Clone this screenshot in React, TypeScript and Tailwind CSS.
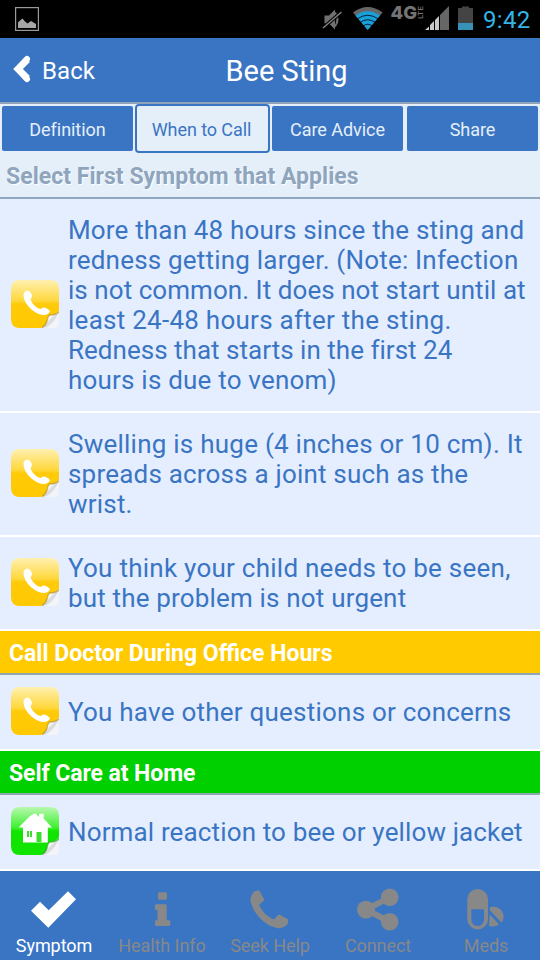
import type { ReactNode } from 'react';

type PageKind = 'phone' | 'home';

interface Line {
  text: string;
  tracking: string;
}

const symptoms: Line[][] = [
  [
    { text: 'More than 48 hours since the sting and', tracking: 'tracking-[0.17px]' },
    { text: 'redness getting larger. (Note: Infection', tracking: 'tracking-[0.2px]' },
    { text: 'is not common. It does not start until at', tracking: 'tracking-[0.05px]' },
    { text: 'least 24-48 hours after the sting.', tracking: 'tracking-[0.26px]' },
    { text: 'Redness that starts in the first 24', tracking: 'tracking-[0.02px]' },
    { text: 'hours is due to venom)', tracking: 'tracking-[0.2px]' },
  ],
  [
    { text: 'Swelling is huge (4 inches or 10 cm). It', tracking: 'tracking-[0.24px]' },
    { text: 'spreads across a joint such as the', tracking: 'tracking-[0.2px]' },
    { text: 'wrist.', tracking: 'tracking-[0.2px]' },
  ],
  [
    { text: 'You think your child needs to be seen,', tracking: 'tracking-[0.25px]' },
    { text: 'but the problem is not urgent', tracking: 'tracking-[0.17px]' },
  ],
];

const phonePath =
  'M1600 1240q0 27-10 70.5t-21 68.5q-21 50-122 106-94 51-186 51-27 0-52.5-3.5t-57.5-12.5-47.5-14.5-55.5-20.5-49-18q-98-35-175-83-128-79-264.5-215.5t-215.5-264.5q-48-77-83-175-3-9-18-49t-20.5-55.5-14.5-47.5-12.5-57.5-3.5-52.5q0-92 51-186 56-101 106-122 25-11 68.5-21t70.5-10q14 0 21 3 18 6 53 76 11 19 30 54t35 63.5 31 53.5q3 4 17.5 25t21.5 35.5 7 28.5q0 20-28.5 50t-62 55-62 53-28.5 46q0 9 5 22.5t8.5 20.5 14 24 11.5 19q76 137 174 235t235 174q2 1 19 11.5t24 14 20.5 8.5 22.5 5q18 0 46-28.5t53-62 55-62 50-28.5q14 0 28.5 7t35.5 21.5 25 17.5q25 15 53.5 31t63.5 35 54 30q70 35 76 53 3 7 3 21z';

function StatusBar() {
  return (
    <div className="flex h-[38px] shrink-0 items-start bg-black pl-[15px] pr-[9px]">
      <svg width="24" height="24" viewBox="0 0 24 24" className="mt-[7px]">
        <rect x="0.6" y="0.6" width="22.8" height="22.8" fill="none" stroke="#9a9a9a" strokeWidth="1.2" />
        <path d="M3 21V15.5L5 13.5L7.5 11.5L10 14.5L12.5 16.5L16 14L18.5 15.5L21 17V21Z" fill="#a6a6a6" />
      </svg>
      <svg width="152" height="38" viewBox="322 0 152 38" className="ml-auto">
        {/* Muted speaker */}
        <path d="M324.500 15.500h4.500l6-6v20l-6-6h-4.500z" fill="#707070" />
        <path d="M335 12.500q5 7 0 14" fill="none" stroke="#707070" strokeWidth="2" />
        <path d="M323 28L341.500 12" stroke="#000" strokeWidth="3.500" />
        <path d="M323 28L341.500 12" stroke="#808080" strokeWidth="1.500" />
        {/* Wifi */}
        <path d="M367.700 30L353 12.500Q367.700 1.500 382.600 12.500Z" fill="#666" />
        <path d="M367.700 30L355.500 15.500Q367.700 7 380 15.500Z" fill="#19a0da" />
        <g fill="none" stroke="#000" strokeWidth="0.800">
          <path d="M357 19Q367.700 11.500 378.500 19" />
          <path d="M360 22.500Q367.700 17 375.500 22.500" />
          <path d="M363 26Q367.700 22.500 372.500 26" />
        </g>
        {/* Network type */}
        <text x="390.500" y="18.900" textLength="26.500" lengthAdjust="spacingAndGlyphs" className="fill-[#747474] font-[Inter] text-[17.800px] font-extrabold">4G</text>
        <text transform="translate(423.400 19) rotate(-90)" textLength="13" lengthAdjust="spacingAndGlyphs" className="fill-[#8a8a8a] font-[Roboto] text-[7.500px]">LTE</text>
        {/* Signal */}
        <path d="M440 30V15L449 6V30Z" fill="#666" />
        <path d="M425 30L429 26.500V30ZM430 30V25L434 21V30ZM435 30V20L439 16V30Z" fill="#c8c8c8" />
        {/* Battery */}
        <path d="M458 8h4V6.500h7V8h4v22h-15z" fill="#444" />
        <path d="M458 23h15v7h-15z" fill="#3792b8" />
      </svg>
      <span className="ml-[9px] mt-[6px] w-[48px] text-[24px] leading-[28px] tracking-[0.3px] text-[#33b5e5]">9:42</span>
    </div>
  );
}

function TopicTab({ label, selected }: { label: string; selected?: boolean }) {
  return selected ? (
    <div className="h-[49px] w-[135px] rounded-[4px] border-2 border-[#3a75c4] bg-[#e5effa] pr-[2px] pt-[12px] text-center text-[18px] leading-[24px] tracking-[-0.08px] text-[#3a75c4]">
      {label}
    </div>
  ) : (
    <div className="mx-[2px] mt-[2px] h-[45px] w-[131px] rounded-[2px] bg-[#3a75c4] pt-[12px] text-center text-[18px] leading-[24px] tracking-[-0.05px] text-[#e5effa]">
      {label}
    </div>
  );
}

function StickyIcon({ kind }: { kind: PageKind }) {
  const home = kind === 'home';
  return (
    <svg width="48" height="48" viewBox="0 0 48 48" className="mb-[2px] shrink-0">
      <defs>
        <linearGradient id={`top-${kind}`} x1="0" y1="0" x2="0" y2="1">
          <stop offset="0" stopColor={home ? '#b8f8b0' : '#fff0b0'} />
          <stop offset="0.44" stopColor={home ? '#3cf02c' : '#ffd73a'} />
          <stop offset="0.5" stopColor={home ? '#10e400' : '#ffca08'} />
          <stop offset="1" stopColor={home ? '#10e400' : '#ffc800'} />
        </linearGradient>
        <linearGradient id={`curl-${kind}`} x1="0" y1="0" x2="1" y2="1">
          <stop offset="0.2" stopColor="#999" />
          <stop offset="0.42" stopColor="#fff" />
          <stop offset="0.58" stopColor="#d4d8dc" />
          <stop offset="0.8" stopColor="#fff" />
        </linearGradient>
      </defs>
      <path d="M9 0H39Q48 0 48 9V43Q48 48 43 48H9Q0 48 0 39V9Q0 0 9 0Z" fill="#f2f4f8" />
      <path d="M9 0H39Q48 0 48 9V32Q47 35 41 36Q38 37 37 41Q36 47 30 48H9Q0 48 0 39V9Q0 0 9 0Z" fill={`url(#top-${kind})`} />
      <path d="M48 30Q45 35 39 35Q36.500 36 36 41Q35 46 30 48Q43 48 48 30Z" fill={`url(#curl-${kind})`} />
      <path d="M47.500 32Q45 35 38.500 35Q36.500 37 36 41Q35 45 31 47.500" fill="none" stroke={home ? '#2b9a22' : '#a88820'} strokeOpacity="0.6" strokeWidth="1.300" />
      {home ? (
        <>
          <path d="M7.500 20.500L19 9L24 6.300L28 10V6.800H32.700V11.500L41 20.500H36.800V35.500H12V20.500Z" fill="#fff" />
          <path d="M16 24h2v6h-2zM19 24h2v6h-2zM25.500 25h5v10h-5z" fill="#3fdc30" />
        </>
      ) : (
        <path
          d="M12.500 14Q13.500 10.500 17 10.500Q20.500 12 21 16Q20.500 18 19.500 19.500Q20.500 22.500 23.500 25.500Q26.500 28.500 29.500 29Q31.500 27 34 27.500Q37.500 29 39 31Q38 34.500 33.500 35Q27 35 20.500 29.500Q12 22 12.500 14Z"
          fill="#fff"
        />
      )}
    </svg>
  );
}

function SymptomRow({ lines, kind = 'phone' }: { lines: Line[]; kind?: PageKind }) {
  return (
    <div className="flex shrink-0 items-center gap-[9px] border-b-2 border-white bg-[#e5eefe] py-3 pl-[11px]">
      <StickyIcon kind={kind} />
      <p className="whitespace-nowrap py-1 text-[26px] leading-[30px] text-[#3a75c4]">
        {lines.map((line) => (
          <span key={line.text} className={`block ${line.tracking}`}>{line.text}</span>
        ))}
      </p>
    </div>
  );
}

function NavItem({ label, active, children }: { label: string; active?: boolean; children: ReactNode }) {
  return (
    <div className={active ? 'flex flex-1 flex-col items-center text-white' : 'flex flex-1 flex-col items-center text-[#888]'}>
      <svg width="48" height="48" viewBox="0 0 48 48" fill="currentColor" className="mt-[14px]">
        {children}
      </svg>
      <span className="mt-px whitespace-nowrap text-[18px] leading-[24px] tracking-[-0.07px]">{label}</span>
    </div>
  );
}

export default function App() {
  return (
    <div className="flex h-[960px] w-[540px] flex-col overflow-hidden bg-[#e5eefe] font-[Roboto,sans-serif]">
      <StatusBar />

      {/* Header */}
      <header className="grid h-[66px] shrink-0 grid-cols-[180px_1fr_147px] border-b-2 border-[#8fa3b8] bg-[#3a75c4] text-white">
        <div className="flex pl-[12px]">
          <svg width="20" height="30" viewBox="0 0 20 30" className="mt-[16px]">
            <path d="M15.500 5.500L6 15L15.500 24.500" fill="none" stroke="#fff" strokeWidth="6.800" />
            <path d="M15 5L6 15L15 25" fill="none" stroke="#fff" strokeWidth="6" strokeLinecap="round" />
          </svg>
          <span className="ml-[10px] mt-[18px] text-[24px] leading-[30px] tracking-[0.1px]">Back</span>
        </div>
        <h1 className="mt-[15px] text-center text-[29px] leading-[36px]">Bee Sting</h1>
      </header>

      <div className="flex h-[50px] shrink-0 bg-[#e5effa]">
        <TopicTab label="Definition" />
        <TopicTab label="When to Call" selected />
        <TopicTab label="Care Advice" />
        <TopicTab label="Share" />
      </div>

      <h2 className="h-[45px] shrink-0 border-b-2 border-[#8fa8c0] bg-[#e5effa] pl-[6px] pt-[8px] text-[23px] font-bold leading-[30px] tracking-[0.03px] text-[#8fa5bd] [text-shadow:1px_1px_1px_#fff]">
        Select First Symptom that Applies
      </h2>

      {symptoms.map((lines) => (
        <SymptomRow key={lines[0].text} lines={lines} />
      ))}

      <h2 className="h-[44px] shrink-0 border-b-2 border-[#8fa8b0] bg-[#ffca00] pl-[9px] pt-[8px] text-[23px] font-bold leading-[30px] text-white">
        Call Doctor During Office Hours
      </h2>
      <SymptomRow lines={[{ text: 'You have other questions or concerns', tracking: 'tracking-[0.23px]' }]} />

      <h2 className="h-[44px] shrink-0 border-b-2 border-[#8fa8b0] bg-[#00cf00] pl-[9px] pt-[8px] text-[23px] font-bold leading-[30px] tracking-[-0.08px] text-white">
        Self Care at Home
      </h2>
      <SymptomRow kind="home" lines={[{ text: 'Normal reaction to bee or yellow jacket', tracking: 'tracking-[0.14px]' }]} />

      {/* Bottom navigation */}
      <nav className="flex flex-1 bg-[#3a75c4]">
        <NavItem label="Symptom" active>
          <path d="M1 25.700L10 16.700L18.700 25.300L38 6.300L46 14.300L18.300 42.700Z" />
        </NavItem>
        <NavItem label="Health Info">
          <rect x="20" y="7.300" width="9" height="7.500" rx="1" />
          <path d="M18 19.300H27.700Q28.700 19.300 28.700 20.300V35.300H31.300Q32.300 35.300 32.300 36.300V40Q32.300 41 31.300 41H18Q17 41 17 40V36.300Q17 35.300 18 35.300H19.500V25H18Q17 25 17 24V20.300Q17 19.300 18 19.300Z" />
        </NavItem>
        <NavItem label="Seek Help">
          <path transform="translate(4.500 5.500) scale(0.0268) translate(-192 -128)" d={phonePath} />
        </NavItem>
        <NavItem label="Connect">
          <path d="M35.700 12.300L12 24.700L35.700 36.700" fill="none" stroke="currentColor" strokeWidth="6" />
          <circle cx="12" cy="24.700" r="9" />
          <circle cx="35.700" cy="12.300" r="8.800" />
          <circle cx="35.700" cy="36.700" r="8.800" />
        </NavItem>
        <NavItem label="Meds">
          <path
            fillRule="evenodd"
            d="M5.300 14.300A10.350 10.350 0 0 1 26 14.300V34A10.350 10.350 0 0 1 5.300 34ZM9.300 24.300V34.700A6.350 6.350 0 0 0 22 34.700V24.300Z"
          />
          <path d="M28 22Q35 20.500 39 25Q44 31 39.700 37.700L28 25.500ZM27.700 29.500L37 39.500Q32.500 42.500 27 41Z" />
        </NavItem>
      </nav>
    </div>
  );
}
